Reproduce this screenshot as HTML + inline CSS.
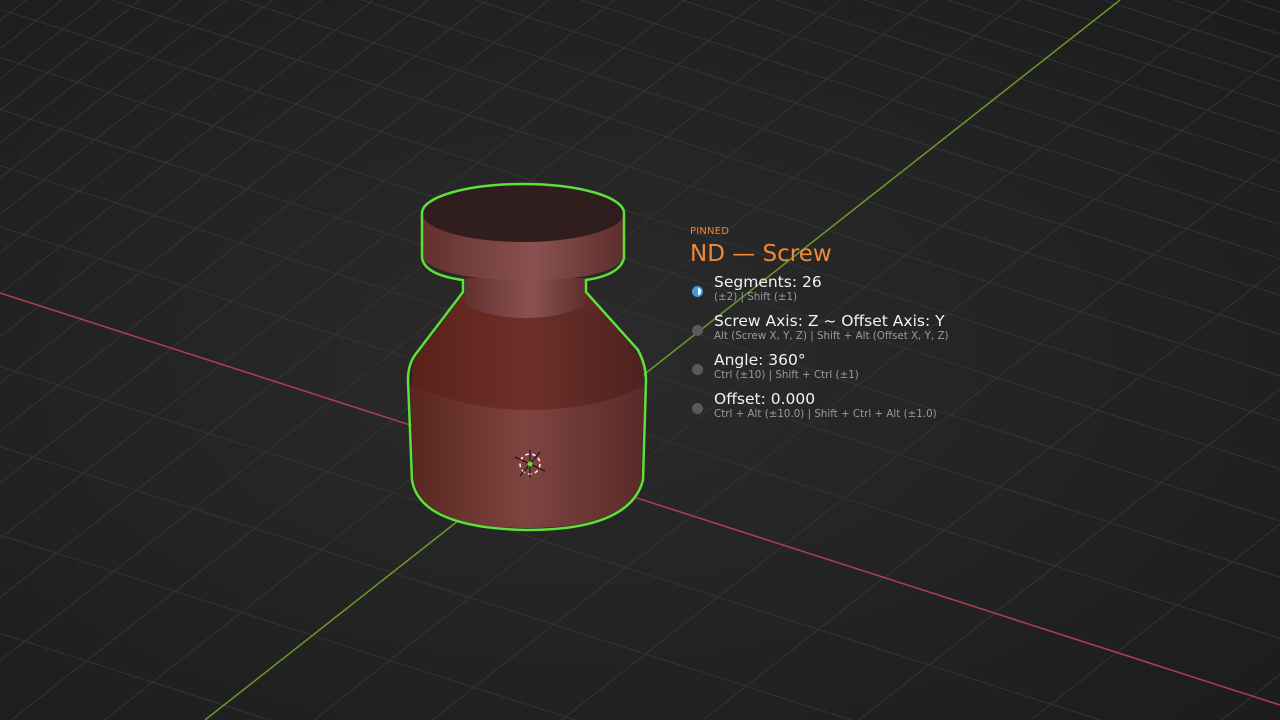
<!DOCTYPE html>
<html><head><meta charset="utf-8"><style>
html,body{margin:0;padding:0;width:1280px;height:720px;overflow:hidden;background:#232323;}
svg{position:absolute;left:0;top:0}
.hud{position:absolute;left:690px;top:226px;font-family:"DejaVu Sans","Liberation Sans",sans-serif;color:#fff}
.pin{color:#f0883a;font-size:10px;letter-spacing:0.2px}
.title{color:#f0883a;font-size:23px;margin-top:2px;line-height:30px}
.row{position:relative;padding-left:24px;margin-top:8px}
.row .t{font-size:15.5px;line-height:18px;color:#f2f2f2}
.row .s{font-size:10.3px;line-height:13px;color:#9a9a9a}
.dot{position:absolute;left:2px;top:13px;width:11px;height:11px;border-radius:50%;background:#5a5a5a}
</style></head><body>
<svg id="g" width="1280" height="720" viewBox="0 0 1280 720">
<defs>
<radialGradient id="bg" cx="0.45" cy="0.5" r="0.75"><stop offset="0" stop-color="#2b2b2b"/><stop offset="1" stop-color="#1c1c1c"/></radialGradient>
<linearGradient id="body" x1="0" x2="1"><stop offset="0" stop-color="#5a2620"/><stop offset="0.5" stop-color="#7e4440"/><stop offset="1" stop-color="#5a2a28"/></linearGradient>
<linearGradient id="cone" x1="0" x2="1"><stop offset="0" stop-color="#5a2218"/><stop offset="0.5" stop-color="#6e2f28"/><stop offset="1" stop-color="#4e2220"/></linearGradient>
<linearGradient id="rim" x1="0" x2="1"><stop offset="0" stop-color="#63302c"/><stop offset="0.55" stop-color="#8a5250"/><stop offset="1" stop-color="#5e2e2c"/></linearGradient>
</defs>
<rect width="1280" height="720" fill="url(#bg)"/>
<g id="grid" stroke="#343434" stroke-width="1"></g>
<line x1="0" y1="293" x2="1280" y2="705" stroke="#b0404e" stroke-width="1.5"/>
<line x1="1120" y1="0" x2="205" y2="720" stroke="#6c9a2a" stroke-width="1.5"/>
<path d="M412,380 Q412,360 420,352 L465,292 L585,292 L636,352 Q644,362 644,380 L641,480 Q630,528 527,528 Q424,528 414,480 Z" fill="url(#cone)"/>
<path d="M410,385 Q470,410 527,410 Q600,410 644,385 L641,480 Q630,528 527,528 Q424,528 414,480 Z" fill="url(#body)"/>
<path d="M465,278 L586,278 L586,305 Q560,318 527,318 Q490,318 465,305 Z" fill="url(#rim)"/>
<path d="M422,213 L624,213 L624,258 Q610,280 527,280 Q440,280 422,258 Z" fill="url(#rim)"/>
<ellipse cx="523" cy="213" rx="101" ry="29" fill="#2f1e1d"/>
<path d="M422,213 A101,29 0 0 1 624,213 L624,258 Q620,275 586,280 L586,292 L638,350 Q646,365 646,380 L643,480 Q630,530 527,530 Q420,528 412,480 L408,380 Q408,365 415,355 L463,292 L463,280 Q425,275 422,258 Z" fill="none" stroke="#5ee03a" stroke-width="2.5" stroke-linejoin="round"/>
<circle cx="530" cy="464" r="10" fill="none" stroke="#fff" stroke-width="1.5" stroke-dasharray="4 3"/>
<circle cx="530" cy="464" r="10" fill="none" stroke="#d03030" stroke-width="1.5" stroke-dasharray="3 4" stroke-dashoffset="3.5"/>
<line x1="515" y1="457" x2="545" y2="471" stroke="#111" stroke-width="1"/>
<line x1="540" y1="452" x2="520" y2="476" stroke="#111" stroke-width="1"/>
<line x1="530" y1="450" x2="530" y2="478" stroke="#111" stroke-width="1"/>
<circle cx="530" cy="464" r="2.5" fill="#5ee03a"/>
</svg>
<div class="hud">
<div class="pin">PINNED</div>
<div class="title">ND — Screw</div>
<div class="row" style="margin-top:4px"><div class="dot" style="background:#3d9ee8"><div style="position:absolute;left:5.5px;top:2px;width:3.5px;height:7px;background:#fff;border-radius:0 4px 4px 0"></div></div><div class="t">Segments: 26</div><div class="s">(±2) | Shift (±1)</div></div>
<div class="row"><div class="dot"></div><div class="t">Screw Axis: Z ~ Offset Axis: Y</div><div class="s">Alt (Screw X, Y, Z) | Shift + Alt (Offset X, Y, Z)</div></div>
<div class="row"><div class="dot"></div><div class="t">Angle: 360°</div><div class="s">Ctrl (±10) | Shift + Ctrl (±1)</div></div>
<div class="row"><div class="dot"></div><div class="t">Offset: 0.000</div><div class="s">Ctrl + Alt (±10.0) | Shift + Ctrl + Alt (±1.0)</div></div>
</div>
<script>
var g=document.getElementById('grid'),ox=530.6,oy=464,ns='http://www.w3.org/2000/svg';
function L(x1,y1,x2,y2){var l=document.createElementNS(ns,'line');l.setAttribute('x1',x1);l.setAttribute('y1',y1);l.setAttribute('x2',x2);l.setAttribute('y2',y2);g.appendChild(l);}
var gd=[-0.786,0.618],rd=[0.952,0.306];
for(var k=-20;k<=10;k++){if(!k)continue;var d=1-k*0.045;if(d<=0)continue;var s=k*80/d;var px=ox+gd[0]*s,py=oy+gd[1]*s;L(px-rd[0]*3000,py-rd[1]*3000,px+rd[0]*3000,py+rd[1]*3000);}
for(var k=-20;k<=12;k++){if(!k)continue;var d=1-k*0.04;if(d<=0)continue;var s=k*78/d;var px=ox+rd[0]*s,py=oy+rd[1]*s;L(px-gd[0]*3000,py-gd[1]*3000,px+gd[0]*3000,py+gd[1]*3000);}
</script>
</body></html>
